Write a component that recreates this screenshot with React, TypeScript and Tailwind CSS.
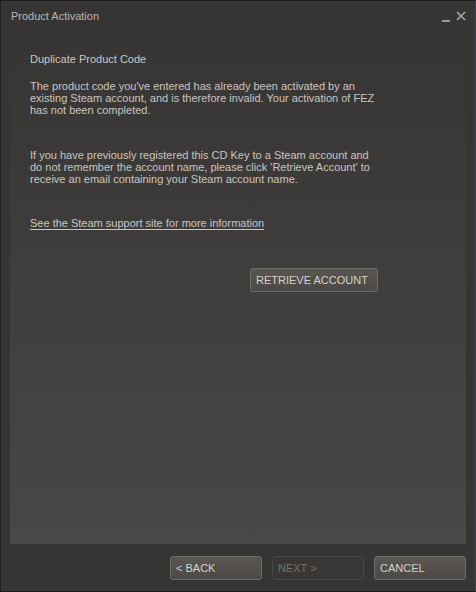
import React from 'react';

const font = { fontFamily: '"Liberation Sans", Arial, sans-serif' };

const SteamButton = ({
  label,
  disabled,
  className,
}: {
  label: string;
  disabled?: boolean;
  className?: string;
}) => (
  <div
    className={
      'flex h-[24px] items-center whitespace-nowrap rounded-[3px] border px-[5px] text-[11px] leading-none ' +
      (disabled
        ? 'border-[#4b4946] bg-[#393735] text-[#75726e] '
        : 'border-[#6f6b67] bg-gradient-to-b from-[#5a5753] to-[#4b4845] text-[#d6d2cc] ') +
      (className || '')
    }
  >
    {label}
  </div>
);

export default function App() {
  return (
    <div
      style={font}
      className="flex h-[592px] w-[476px] flex-col border border-[#1d1d1d] border-r-[#3d4658] bg-[#373533] text-[#c9c5c0]"
    >
      <div className="flex h-[30px] shrink-0 items-center justify-between pl-[10px] pr-[9px]">
        <span className="text-[11px] text-[#b9b5b0]">Product Activation</span>
        <div className="flex items-center gap-[6px] text-[#b9b5b0]">
          <div className="mt-[10px] h-[2px] w-[8px] bg-[#9c9894]" />
          <svg width="10" height="10" viewBox="0 0 10 10">
            <path d="M1 1 L9 9 M9 1 L1 9" stroke="#a8a49f" strokeWidth="1.6" />
          </svg>
        </div>
      </div>

      <div className="mx-[9px] flex h-[513px] flex-col bg-gradient-to-b from-[#373533] to-[#4a4846] px-[20px] pt-[22px] text-[11px] leading-[12px] whitespace-nowrap">
        <p className="text-[#cbc7c2]">Duplicate Product Code</p>
        <p className="mt-[15px]">
          The product code you've entered has already been activated by an
          <br />
          existing Steam account, and is therefore invalid. Your activation of FEZ
          <br />
          has not been completed.
        </p>
        <p className="mt-[33px]">
          If you have previously registered this CD Key to a Steam account and
          <br />
          do not remember the account name, please click 'Retrieve Account' to
          <br />
          receive an email containing your Steam account name.
        </p>
        <p className="mt-[32px] underline underline-offset-[2px]">
          See the Steam support site for more information
        </p>
        <div className="mt-[39px] flex pl-[220px]">
          <SteamButton label="RETRIEVE ACCOUNT" className="w-[128px]" />
        </div>
      </div>

      <div className="flex justify-end gap-[10px] pr-[9px] pt-[12px]">
        <SteamButton label="< BACK" className="w-[92px]" />
        <SteamButton label="NEXT >" disabled className="w-[92px]" />
        <SteamButton label="CANCEL" className="w-[92px]" />
      </div>
    </div>
  );
}
